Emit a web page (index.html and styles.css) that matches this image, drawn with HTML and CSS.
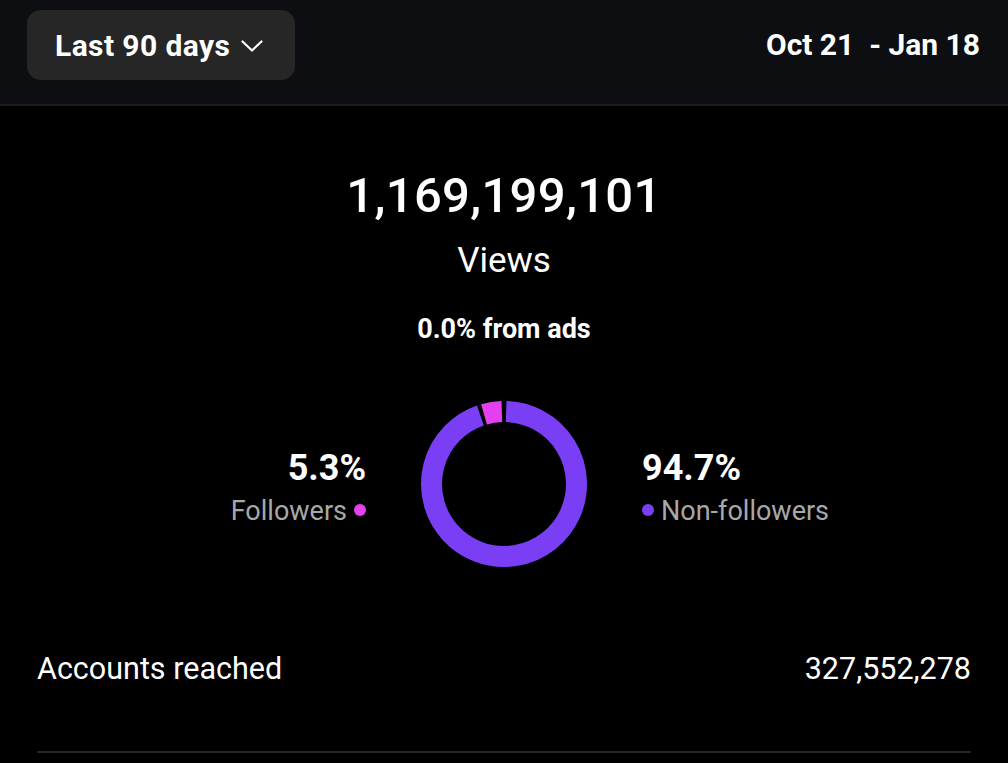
FILE: index.html
```html
<!DOCTYPE html>
<html>
<head>
<meta charset="utf-8">
<link rel="stylesheet" href="styles.css">
</head>
<body>
<header class="topbar">
  <button class="range-btn">
    <span>Last 90 days</span>
    <svg class="chev" width="22" height="12" viewBox="0 0 22 12"><path d="M1.5 1.5 L11 10.5 L20.5 1.5" fill="none" stroke="#fff" stroke-width="2.2" stroke-linecap="round" stroke-linejoin="round"/></svg>
  </button>
  <div class="dates">Oct 21&nbsp; - Jan 18</div>
</header>
<main class="content">
  <div class="total">1,169,199,101</div>
  <div class="total-label">Views</div>
  <div class="ads">0.0% from ads</div>
  <div class="split">
    <div class="side left">
      <div class="pct">5.3%</div>
      <div class="lbl">Followers<span class="dot pink"></span></div>
    </div>
    <svg class="donut" width="168" height="168" viewBox="-84 -84 168 168">
      <path d="M2.151 -72.468 A72.5 72.5 0 1 1 -23.604 -68.550" fill="none" stroke="#7a3ef5" stroke-width="21"/>
      <path d="M-19.984 -69.691 A72.5 72.5 0 0 1 -2.151 -72.468" fill="none" stroke="#e540ef" stroke-width="21"/>
    </svg>
    <div class="side right">
      <div class="pct">94.7%</div>
      <div class="lbl"><span class="dot purple"></span>Non-followers</div>
    </div>
  </div>
  <div class="row">
    <span>Accounts reached</span>
    <span>327,552,278</span>
  </div>
  <div class="divider"></div>
</main>
</body>
</html>
```
FILE: styles.css
```css
* { box-sizing: border-box; }
html, body { margin: 0; padding: 0; background: #000; }
body {
  font-family: Roboto, "Noto Sans", Arial, sans-serif;
  color: #fff;
  width: 1008px;
  height: 763px;
  overflow: hidden;
}
.topbar {
  height: 106px;
  background: #0c0e11;
  border-bottom: 2px solid #1c1d20;
  display: flex;
  justify-content: space-between;
  align-items: flex-start;
  padding: 10px 28px 0 27px;
}
.range-btn {
  height: 70px;
  width: 268px;
  border: none;
  border-radius: 14px;
  background: #262626;
  color: #fff;
  font-family: inherit;
  font-size: 30px;
  font-weight: 700;
  letter-spacing: 0.4px;
  display: flex;
  align-items: center;
  gap: 11px;
  padding: 0 0 0 28px;
}
.chev { margin-top: 2px; }
.dates {
  font-size: 30px;
  font-weight: 700;
  line-height: 70px;
}
.content {
  display: flex;
  flex-direction: column;
  align-items: center;
  padding: 0 37px;
}
.total {
  margin-top: 66px;
  font-size: 49px;
  font-weight: 500;
  line-height: 48px;
  letter-spacing: 0.3px;
}
.total-label {
  margin-top: 25px;
  font-size: 35px;
  line-height: 32px;
}
.ads {
  margin-top: 41px;
  font-size: 27px;
  font-weight: 700;
  line-height: 23px;
}
.split {
  align-self: stretch;
  margin-top: 59px;
  display: grid;
  grid-template-columns: 1fr 168px 1fr;
  align-items: center;
  column-gap: 54px;
}
.side {
  display: flex;
  flex-direction: column;
  gap: 6px;
  margin-top: 8px;
}
.side.left { align-items: flex-end; }
.side.right { align-items: flex-start; }
.pct {
  font-size: 36px;
  font-weight: 700;
  line-height: 40px;
}
.lbl {
  font-size: 27px;
  color: #a8a8a8;
  display: flex;
  align-items: center;
  gap: 7px;
  line-height: 34px;
}
.dot {
  width: 12px;
  height: 12px;
  border-radius: 50%;
  display: inline-block;
  margin-top: -3px;
}
.dot.pink { background: #e540ef; }
.dot.purple { background: #7a3ef5; }
.row {
  align-self: stretch;
  margin-top: 84px;
  display: flex;
  justify-content: space-between;
  font-size: 30.5px;
  line-height: 34px;
}
.divider {
  align-self: stretch;
  margin-top: 65px;
  height: 2px;
  background: #262626;
}
```
